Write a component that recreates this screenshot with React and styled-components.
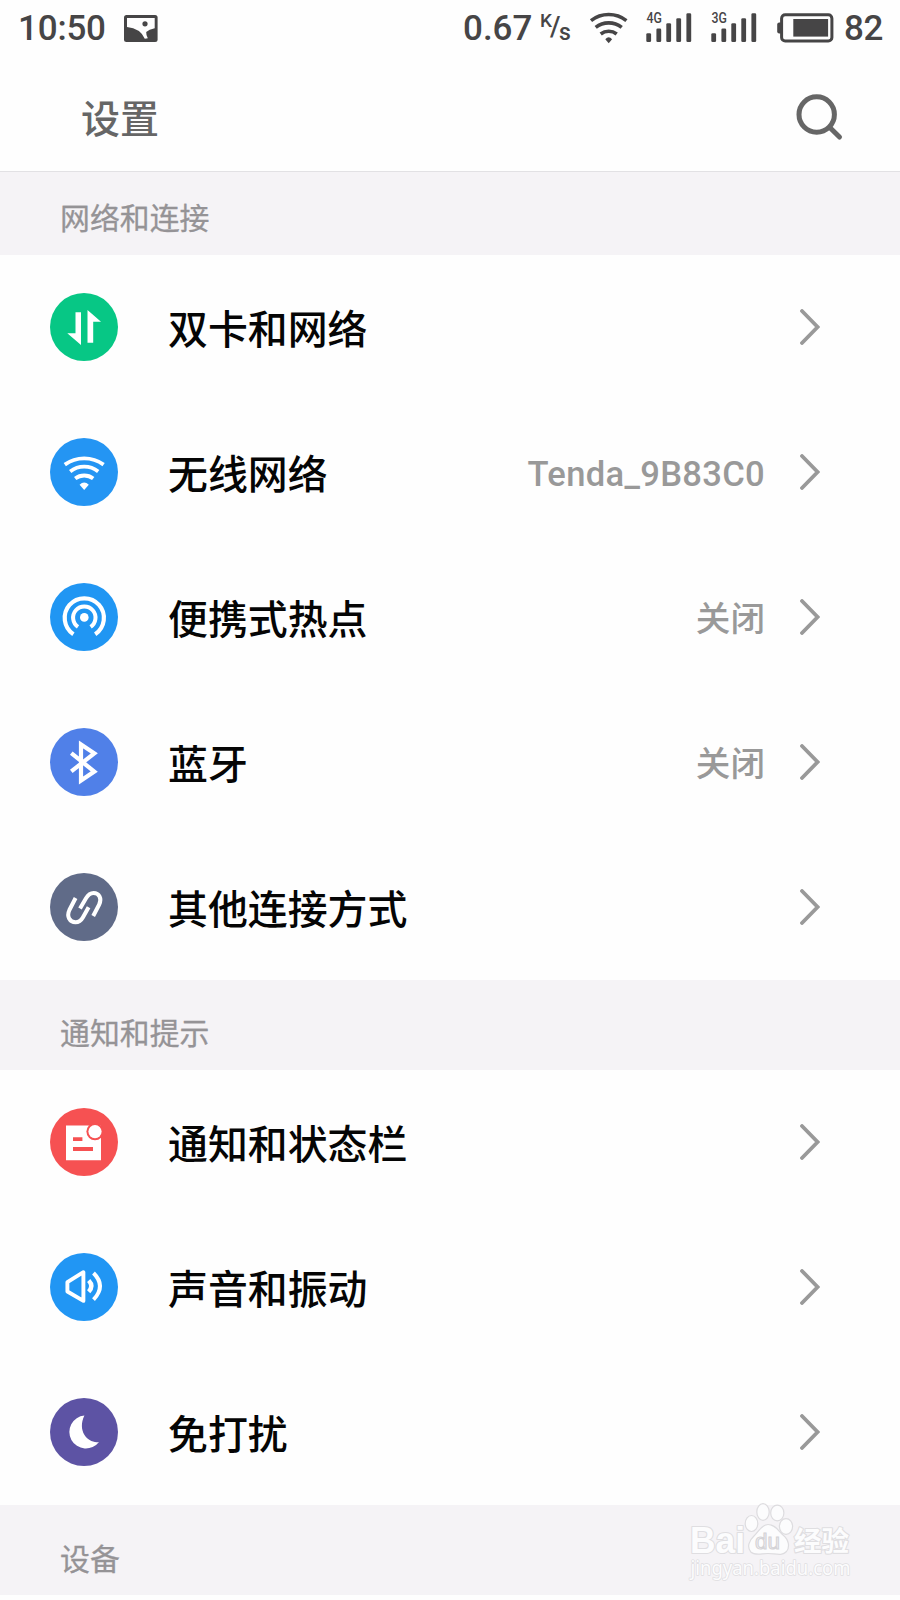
import React from "react";
import styled, { createGlobalStyle } from "styled-components";

const GlobalStyle = createGlobalStyle`
  * { box-sizing: border-box; }
  body { margin: 0; background: #fefefe; }
`;

const Screen = styled.main`
  position: relative;
  width: 900px;
  height: 1600px;
  overflow: hidden;
  background: #fefefe;
  font-family: Roboto, "Noto Sans CJK SC", sans-serif;
  font-weight: 500;
`;

const StatusBar = styled.div`
  height: 57px;
  padding: 0 17px 1px 18px;
  display: flex;
  align-items: center;
  justify-content: space-between;
  color: #464546;
  font-size: 35px;
  line-height: 56px;
  svg { display: block; flex: none; }
`;

const StatusGroup = styled.div`
  display: flex;
  align-items: center;
`;

const Clock = styled.span`
  width: 106px;
  padding-top: 1px;
  letter-spacing: -0.2px;
`;

const Speed = styled.span`
  width: 77px;
  padding-top: 1px;
`;

const SpeedUnit = styled.span`
  display: flex;
  width: 49px;
  line-height: 1;
`;

const UnitPart = styled.span`
  font-size: ${(p) => p.$size}px;
  width: ${(p) => p.$width}px;
  margin-top: ${(p) => p.$top}px;
`;

const Signals = styled.span`
  display: flex;
  gap: 19px;
  margin: 0 20px 0 18px;
`;

const Battery = styled.span`
  display: flex;
  align-items: center;
  gap: 10px;
`;

const Percent = styled.span`
  padding-top: 1px;
  letter-spacing: -0.4px;
`;

const Header = styled.header`
  height: 115px;
  padding: 7px 56px 0 81px;
  display: flex;
  align-items: center;
  justify-content: space-between;
  border-bottom: 1px solid #e2e1e4;
`;

const Title = styled.h1`
  margin: 5px 0 0;
  color: #666;
  font-size: 39px;
  line-height: 50px;
  font-weight: 500;
`;

const SectionHeading = styled.h2`
  margin: 0;
  height: ${(p) => p.$height}px;
  padding: ${(p) => p.$top}px 0 0 60px;
  background: #f5f3f6;
  color: #959396;
  font-size: 29.9px;
  line-height: 40px;
  font-weight: 400;
  -webkit-text-stroke: 0.3px #959396;
`;

const Row = styled.div`
  height: 145px;
  padding: 0 80px 2px 50px;
  display: flex;
  align-items: center;
`;

const Badge = styled.span`
  width: 68px;
  height: 68px;
  border-radius: 50%;
  background: ${(p) => p.$color};
  svg { display: block; }
`;

const Label = styled.span`
  flex: 1;
  margin-left: 50px;
  padding-top: 8px;
  color: #050505;
  font-size: 39.9px;
  line-height: 50px;
`;

const Value = styled.span`
  margin-right: 35px;
  padding-top: ${(p) => (p.$latin ? 4 : 5)}px;
  color: #999;
  font-size: 34.6px;
  line-height: 50px;
  letter-spacing: ${(p) => (p.$latin ? "0.3px" : "0")};
`;

const Watermark = styled.div`
  position: absolute;
  left: 684px;
  top: 1498px;
`;

const Stroke = ({ d, w = 3.6, ...rest }) => (
  <path d={d} fill="none" stroke="#fff" strokeWidth={w} {...rest} />
);

const glyphs = {
  data: (
    <g fill="#fff">
      <path d="M25.5 19.3H31V52L17.3 40.3H25.5z" />
      <path d="M37.5 49.7V17L51 28.7H43.2V49.7z" />
    </g>
  ),
  wifi: (
    <>
      <Stroke d="M14.8 26.6A33 33 0 0 1 53.6 26.6" w={3.8} />
      <Stroke d="M20.2 33.4A23 23 0 0 1 48.2 33.4" w={3.8} />
      <Stroke d="M25.2 40.6A14.7 14.7 0 0 1 43.2 40.6" w={3.8} />
      <path d="M29.6 46.8Q34.2 42.4 38.8 46.8L34.2 52z" fill="#fff" />
    </>
  ),
  hotspot: (
    <>
      <Stroke d="M23.4 51.2A19.6 19.6 0 1 1 45.2 51.2" w={4.2} />
      <Stroke d="M28 43.9A11.2 11.2 0 1 1 40.6 43.9" w={4} />
      <circle cx="34.3" cy="34.4" r="4.3" fill="#fff" />
    </>
  ),
  bluetooth: <Stroke d="M21.3 25.2L44.3 43.5L31 52.6V16.4L44.3 25.3L21.3 43.4" w={4.2} />,
  link: (
    <>
      <Stroke d="M25.6 25L19.4 37C16.4 43.5 19.6 49.2 25.5 49.2C29 49.2 31.2 47.4 33 44.2L38.6 34.2" w={4} />
      <Stroke d="M30 35.6L36 25.2C38.2 21.6 40.2 20 43.6 20C49 20 52.2 25.6 49.2 31.5L43.2 43" w={4} />
    </>
  ),
  notice: (
    <>
      <path d="M16 17.5H51V52.2H16z" fill="#fff" />
      <circle cx="45" cy="23.6" r="8.6" fill="#f65152" />
      <circle cx="45" cy="23.6" r="6.6" fill="#fff" />
      <path d="M23 29.2h9.4v3.9H23zM23 38.9h20v4H23z" fill="#f65152" />
    </>
  ),
  sound: (
    <>
      <Stroke d="M17.4 29.2L33.4 19.2V47.9L17.4 38.5z" w={3.9} strokeLinejoin="round" />
      <Stroke d="M38.7 27.5Q44 33 38.7 38.7" w={4.4} />
      <Stroke d="M43.5 20Q56.5 33 43.5 46.7" w={3.9} />
    </>
  ),
  moon: <path d="M34.4 17.5A16.5 16.5 0 1 0 49 43.9C39 46 26.5 34 34.4 17.5z" fill="#fff" />,
};

const Chevron = () => (
  <svg width="20" height="36" viewBox="0 0 20 36">
    <path d="M2 2L17.6 18L2 34" fill="none" stroke="#999" strokeWidth="3.8" strokeLinecap="round" />
  </svg>
);

const Photo = () => (
  <svg width="34" height="27" viewBox="0 0 34 27">
    <rect width="33.6" height="27" rx="2.5" fill="#464546" />
    <path d="M3 3H30.7V13.2Q25 14.4 22.2 17Q22 19.8 23.8 23.3L20.8 23.8Q16.5 13.4 3 12z" fill="#fefefe" />
    <circle cx="21" cy="8.8" r="2.6" fill="#464546" />
  </svg>
);

const StatusWifi = () => (
  <svg width="39" height="32" viewBox="-1 0 39 32">
    <g fill="none" stroke="#464546" strokeWidth="3.6">
      <path d="M1 8.6A29 29 0 0 1 36.4 8.6" />
      <path d="M5.7 15.4A21 21 0 0 1 31.7 15.4" />
      <path d="M10.7 22A13 13 0 0 1 26.7 22" />
    </g>
    <path d="M15.3 27.3Q18.7 23.2 22.1 27.3L18.7 31.2z" fill="#464546" />
  </svg>
);

const Signal = ({ label }) => (
  <svg width="46" height="42" viewBox="0 -6 46 42">
    <text x="0.4" y="10.3" fontSize="14" textLength="15.4" lengthAdjust="spacingAndGlyphs" fill="#464546">{label}</text>
    <g fill="#464546">
      <rect x="0.3" y="20.3" width="4.8" height="8.8" rx="1.3" />
      <rect x="10.4" y="15.4" width="4.8" height="13.7" rx="1.3" />
      <rect x="20.3" y="10.3" width="4.8" height="18.8" rx="1.3" />
      <rect x="30.3" y="5.3" width="4.8" height="23.8" rx="1.3" />
      <rect x="40.4" y="0.3" width="4.8" height="28.8" rx="1.3" />
    </g>
  </svg>
);

const BatteryIcon = () => (
  <svg width="57" height="30" viewBox="0 0 57 30">
    <rect x="4.6" y="1.8" width="50.3" height="26.2" rx="3.6" fill="none" stroke="#464546" strokeWidth="3" />
    <path d="M4 9.5H2.2Q0.2 9.5 0.2 11.5V18.5Q0.2 20.5 2.2 20.5H4z" fill="#464546" />
    <rect x="16.3" y="6" width="34.8" height="17.6" fill="#464546" />
  </svg>
);

const SearchIcon = () => (
  <svg width="48" height="48" viewBox="0 0 48 48">
    <g fill="none" stroke="#666" strokeWidth="5" strokeLinecap="round">
      <circle cx="20.7" cy="20.5" r="17.7" />
      <path d="M33.8 33.5L43.5 43" />
    </g>
  </svg>
);

const BaiduMark = () => (
  <svg width="180" height="90" viewBox="0 0 180 90">
    <g fill="#fcfcfd" stroke="#dfdee1" strokeWidth="2.2" paintOrder="stroke" strokeLinejoin="round">
      <text x="6" y="54.5" fontFamily="Liberation Sans" fontWeight="700" fontSize="36" textLength="55" lengthAdjust="spacingAndGlyphs">Bai</text>
      <text x="110" y="52.5" fontFamily="Noto Sans CJK SC" fontWeight="700" fontSize="27.5" textLength="55">经验</text>
      <text x="6.5" y="76.5" fontFamily="Noto Sans" fontWeight="400" fontSize="20" textLength="160" lengthAdjust="spacingAndGlyphs" strokeWidth="1.6">jingyan.baidu.com</text>
    </g>
    <g fill="#fcfcfd" stroke="#dddcdf" strokeWidth="1.2">
      <ellipse cx="67.5" cy="25.5" rx="6.3" ry="8" />
      <ellipse cx="79" cy="14" rx="6.2" ry="8.3" />
      <ellipse cx="93.3" cy="15" rx="6.6" ry="7.8" />
      <ellipse cx="102" cy="28.5" rx="6.6" ry="7.8" />
      <path d="M84 26.5C91 26.5 94 32.5 99 37C105 42 106 49 102.5 53.5C98 58.5 91 55.5 84 55.5C77 55.5 71 58 66.8 54C62.6 49 65 42.5 70 38C75 33.5 77.5 26.5 84 26.5z" />
    </g>
    <text x="71" y="51" fontFamily="Liberation Sans" fontWeight="400" fontSize="22" textLength="25" lengthAdjust="spacingAndGlyphs" fill="#f2f1f4" stroke="#d4d3d6" strokeWidth="1.1">du</text>
  </svg>
);

const sections = [
  {
    title: "网络和连接",
    height: 83,
    top: 27,
    rows: [
      { label: "双卡和网络", glyph: "data", color: "#07c785" },
      { label: "无线网络", glyph: "wifi", color: "#2495f3", value: "Tenda_9B83C0", latin: true },
      { label: "便携式热点", glyph: "hotspot", color: "#2096f3", value: "关闭" },
      { label: "蓝牙", glyph: "bluetooth", color: "#5080e8", value: "关闭" },
      { label: "其他连接方式", glyph: "link", color: "#606b88" },
    ],
  },
  {
    title: "通知和提示",
    height: 90,
    top: 34,
    rows: [
      { label: "通知和状态栏", glyph: "notice", color: "#f65152" },
      { label: "声音和振动", glyph: "sound", color: "#2196f4" },
      { label: "免打扰", glyph: "moon", color: "#5d53a4" },
    ],
  },
  { title: "设备", height: 90, top: 35, rows: [] },
];

const SettingRow = ({ label, glyph, color, value, latin }) => (
  <Row>
    <Badge $color={color}>
      <svg width="68" height="68" viewBox="0 0 68 68">{glyphs[glyph]}</svg>
    </Badge>
    <Label>{label}</Label>
    {value && <Value $latin={latin}>{value}</Value>}
    <Chevron />
  </Row>
);

export default function App() {
  return (
    <Screen>
      <GlobalStyle />
      <StatusBar>
        <StatusGroup>
          <Clock>10:50</Clock>
          <Photo />
        </StatusGroup>
        <StatusGroup>
          <Speed>0.67</Speed>
          <SpeedUnit>
            <UnitPart $size={19} $width={10} $top={-1}>K</UnitPart>
            <UnitPart $size={27} $width={9} $top={2}>/</UnitPart>
            <UnitPart $size={23} $width={12} $top={9}>s</UnitPart>
          </SpeedUnit>
          <StatusWifi />
          <Signals>
            <Signal label="4G" />
            <Signal label="3G" />
          </Signals>
          <Battery>
            <BatteryIcon />
            <Percent>82</Percent>
          </Battery>
        </StatusGroup>
      </StatusBar>
      <Header>
        <Title>设置</Title>
        <SearchIcon />
      </Header>
      {sections.map((s) => (
        <section key={s.title}>
          <SectionHeading $height={s.height} $top={s.top}>{s.title}</SectionHeading>
          {s.rows.map((r) => (
            <SettingRow key={r.label} {...r} />
          ))}
        </section>
      ))}
      <Watermark>
        <BaiduMark />
      </Watermark>
    </Screen>
  );
}
